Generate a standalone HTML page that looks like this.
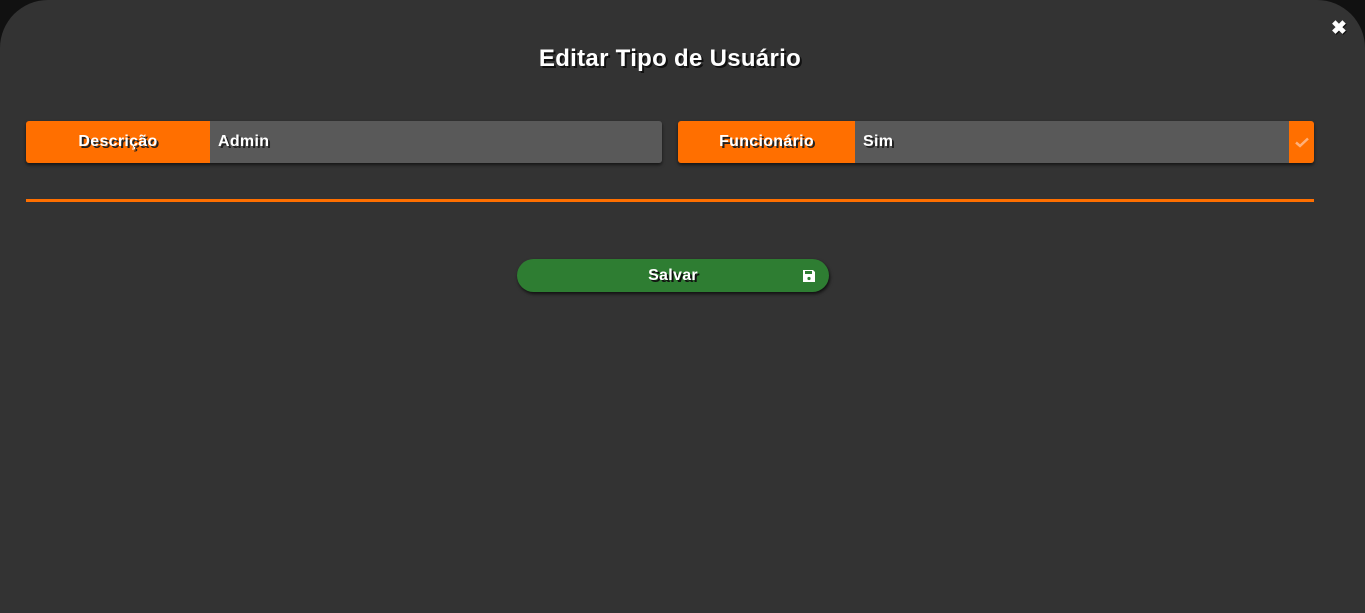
<!DOCTYPE html>
<html><head><meta charset="utf-8"><style>
*{margin:0;padding:0;box-sizing:border-box}
html,body{width:1365px;height:613px;overflow:hidden}
body{background:#111;font-family:"Liberation Sans",sans-serif;font-weight:bold;color:#fff}
.m{position:absolute;left:0;top:0;width:1365px;height:613px;background:#333;border-radius:48px 48px 0 0}
.t{position:absolute;top:45px;left:0;width:1340px;text-align:center;font-size:24px;text-shadow:2px 2px 0 #111;letter-spacing:0.3px}
.x{position:absolute;left:1331px;top:17px;font-size:19px;text-shadow:1px 1px 0 #111}
.f{position:absolute;top:121px;height:42px;display:flex;box-shadow:0 2px 3px rgba(0,0,0,.6);border-radius:3px;overflow:hidden}
.l{background:#ff6f00;display:flex;align-items:center;justify-content:center;font-size:16px;text-shadow:2px 2px 0 #222;letter-spacing:0.3px}
.v{background:#595959;display:flex;align-items:center;padding-left:8px;font-size:16px;text-shadow:2px 2px 0 #222;flex:1;letter-spacing:0.3px}
.hr{position:absolute;left:26px;top:199px;width:1288px;height:3px;background:#ff6f00}
.b{position:absolute;left:517px;top:259px;width:312px;height:33px;background:#2e7d32;border-radius:17px;box-shadow:1px 2px 3px rgba(0,0,0,.7);text-align:center;line-height:33px;font-size:16px;text-shadow:2px 2px 0 #111;letter-spacing:0.3px}
</style></head><body>
<div class="m">
<div class="t">Editar Tipo de Usuário</div>
<div class="x">✖</div>
<div class="f" style="left:26px;width:636px"><div class="l" style="width:184px">Descrição</div><div class="v">Admin</div></div>
<div class="f" style="left:678px;width:636px"><div class="l" style="width:177px">Funcionário</div><div class="v">Sim</div><div class="l" style="width:25px"><svg width="16" height="12" viewBox="0 0 16 12"><path d="M2 6.5l4 3.5 8-7.5" fill="none" stroke="#ffb07a" stroke-width="2.5"/></svg></div></div>
<div class="hr"></div>
<div class="b">Salvar<svg style="position:absolute;right:13px;top:10px" width="14" height="14" viewBox="0 0 14 14"><path d="M1 1h10l2 2v10H1z" fill="#fff"/><rect x="3" y="2" width="7" height="3" fill="#2e7d32"/><circle cx="7" cy="9.5" r="1.6" fill="#2e7d32"/></svg></div>
</div>
</body></html>
